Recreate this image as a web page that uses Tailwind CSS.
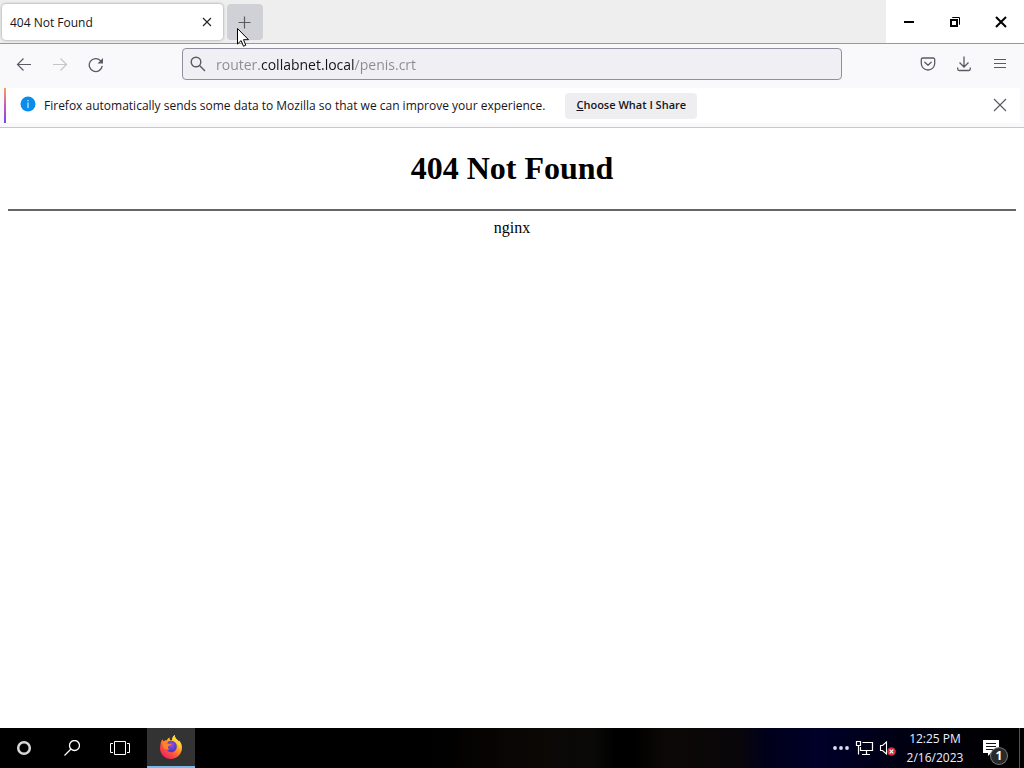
<!DOCTYPE html>
<html lang="en">
<head>
<meta charset="utf-8">
<meta name="viewport" content="width=device-width, initial-scale=1">
<title>404 Not Found</title>
<script src="https://cdn.jsdelivr.net/npm/@tailwindcss/browser@4"></script>
</head>
<body class="relative flex h-screen flex-col overflow-hidden bg-white font-['Open_Sans',sans-serif] text-xs text-[#15141a]">

<!-- Tab strip -->
<header class="flex h-11 shrink-0 border-b border-[#999] bg-[#eeeeee]">
  <div class="flex flex-1 items-start gap-1 pt-1 pl-0.5">
    <div class="flex h-9 w-[221px] items-center justify-between rounded bg-white pr-2 pl-2 shadow-[0_0_3px_rgba(0,0,0,0.4)]">
      <span class="pt-0.5">404 Not Found</span>
      <button type="button" aria-label="Close tab" class="flex size-4 items-center justify-center">
        <svg class="size-4" viewBox="0 0 16 16" fill="none" stroke="#222" stroke-width="1.1"><path d="M4 4l8 8M12 4l-8 8"/></svg>
      </button>
    </div>
    <button type="button" aria-label="New tab" class="flex size-9 items-center justify-center rounded bg-[#d0d1d7]">
      <svg class="size-4" viewBox="0 0 16 16" fill="none" stroke="#5b5b66" stroke-width="1.2"><path d="M7.5 2.5v12M1.5 8.5h12"/></svg>
    </button>
  </div>
  <div class="flex w-[138px] bg-white">
    <button type="button" aria-label="Minimize" class="flex flex-1 items-center justify-center">
      <svg class="size-4" viewBox="0 0 16 16"><path d="M3 7h10v2H3z"/></svg>
    </button>
    <button type="button" aria-label="Restore" class="flex flex-1 items-center justify-center">
      <svg class="size-4" viewBox="0 0 16 16" fill="none" stroke="#000"><path stroke-width="2" d="M4 6h6v6H4z"/><path d="M5.500 4V3.500h7v7H12"/></svg>
    </button>
    <button type="button" aria-label="Close" class="flex flex-1 items-center justify-center">
      <svg class="size-4" viewBox="0 0 16 16" fill="none" stroke="#000" stroke-width="2"><path d="M3 3l10 10M13 3L3 13"/></svg>
    </button>
  </div>
</header>

<!-- Navigation bar -->
<nav class="flex h-11 shrink-0 items-start bg-[#f9f9fb] px-4 pt-1" aria-label="Navigation">
  <div class="flex h-8 w-[166px] items-center gap-5 pt-0.5">
    <button type="button" aria-label="Back"><svg class="size-4" viewBox="0 0 16 16" fill="none" stroke="#5b5b66" stroke-width="1.2"><path d="M15 7.500H1.500M7.500 1.500l-6 6 6 6"/></svg></button>
    <button type="button" aria-label="Forward" disabled><svg class="size-4" viewBox="0 0 16 16" fill="none" stroke="#c5c5c9" stroke-width="1.200"><path d="M1 7.500h13.500M8.500 1.500l6 6-6 6"/></svg></button>
    <button type="button" aria-label="Reload"><svg class="size-4" viewBox="0 0 16 16" fill="none" stroke="#5b5b66" stroke-width="1.300"><path d="M14.200 8.800A6.500 6.500 0 1 1 12.500 3.600L14 5"/><path fill="#5b5b66" stroke="none" d="M15 1v5.500H9.500z"/></svg></button>
  </div>
  <div class="flex h-8 flex-1 items-center gap-2.5 rounded border border-[#8f8f9d] bg-[#f0f0f4] px-[7px]">
    <svg class="size-4 shrink-0" viewBox="0 0 16 16" fill="none" stroke="#5b5b66" stroke-width="1.400"><circle cx="6" cy="6" r="4.800"/><path d="M9.500 9.500L15 15"/></svg>
    <input type="text" aria-label="Address" value="router.collabnet.local/penis.crt" class="h-6 min-w-0 flex-1 bg-[linear-gradient(90deg,#8a8a92_44px,#15141a_44px,#15141a_138px,#8a8a92_138px)] bg-clip-text text-sm text-transparent outline-none">
  </div>
  <div class="flex h-8 w-[166px] items-center justify-end gap-5">
    <button type="button" aria-label="Save to Pocket"><svg class="size-4" viewBox="0 0 16 16" fill="none" stroke="#5b5b66" stroke-width="1.300" stroke-linecap="round" stroke-linejoin="round"><path d="M2.800 2h10.400A1.500 1.500 0 0 1 14.700 3.500v4a6.700 6.500 0 0 1-13.400 0v-4A1.500 1.500 0 0 1 2.800 2z"/><path d="M4.800 6.300L8 9.300l3.200-3"/></svg></button>
    <button type="button" aria-label="Downloads"><svg class="size-4" viewBox="0 0 16 16" fill="none" stroke="#5b5b66" stroke-width="1.300"><path d="M8 .500v10M3.500 6.500L8 11l4.500-4.500M1.700 11.500v1.500a1.500 1.500 0 0 0 1.500 1.500h9.600a1.500 1.500 0 0 0 1.500-1.500v-1.500"/></svg></button>
    <button type="button" aria-label="Menu"><svg class="size-4" viewBox="0 0 16 16" fill="none" stroke="#5b5b66" stroke-width="1.200"><path d="M2 3.500h12M2 7.500h12M2 11.500h12"/></svg></button>
  </div>
</nav>

<!-- Data sharing notification -->
<section class="flex h-10 shrink-0 border-b border-[#c8c8cc] bg-[#f9f9fb] px-1 pb-1" aria-label="Notification">
  <div class="w-0.5 bg-linear-to-b from-[#ff9a56] via-[#c45ab5] to-[#7542e5]"></div>
  <div class="flex flex-1 items-center bg-white pl-3.5">
    <svg class="mr-2 mb-1 size-4" viewBox="0 0 16 16"><circle cx="8" cy="8" r="7.500" fill="#0a8ced"/><path fill="#d5efff" d="M7.400 4h1.200v1.300H7.400zM7.400 6.500h1.200V12H7.400z"/></svg>
    <span>Firefox automatically sends some data to Mozilla so that we can improve your experience.</span>
    <button type="button" class="ml-5 h-[26px] rounded bg-[#eeeef0] px-[11px] text-[11px] font-semibold"><u>C</u>hoose What I Share</button>
    <button type="button" aria-label="Dismiss" class="mr-3 mb-0.5 ml-auto"><svg class="size-4" viewBox="0 0 16 16" fill="none" stroke="#5b5b66" stroke-width="1.200"><path d="M2 2l12 12M14 2L2 14"/></svg></button>
  </div>
</section>

<!-- Page content -->
<main class="min-h-0 flex-1 px-2 pt-[22px] text-center font-['Liberation_Serif',serif] text-base text-black">
  <h1 class="text-[32px] leading-9 font-bold">404 Not Found</h1>
  <hr class="mt-[23px] mb-[7px] border-t-2 border-[#65656a]">
  <p class="leading-5">nginx</p>
</main>

<!-- Taskbar -->
<footer class="flex h-10 shrink-0 items-stretch bg-[linear-gradient(90deg,#000_42%,#0b0705_52%,#0a0908_58%,#000_60%,#000_62%,#0c0806_65%,#09060a_72%,#00001c_75%,#00002a_80%,#000018_86%,#000006_94%,#000_100%)] text-[#eeeeff]">
  <button type="button" aria-label="Cortana" class="flex w-12 items-center justify-center"><svg class="size-4" viewBox="0 0 16 16" fill="none" stroke="#d8d8d8" stroke-width="2.500"><circle cx="8" cy="8" r="5.800"/></svg></button>
  <button type="button" aria-label="Search" class="flex w-12 items-center justify-center"><svg class="size-4" viewBox="0 0 16 16" fill="none" stroke="#fff" stroke-width="1.300"><circle cx="10.500" cy="5.500" r="5"/><path d="M7 9L.500 15.500"/></svg></button>
  <button type="button" aria-label="Task view" class="flex w-12 items-center justify-center"><svg class="h-4 w-5" viewBox="0 0 20 16" fill="none" stroke="#fff"><path d="M4.500 1.500h11v13h-11zM3 3.500H.500v9H3M17 3.500h2.500v9H17"/></svg></button>
  <button type="button" aria-label="Firefox" class="ml-[3px] flex w-12 items-center justify-center border-b-2 border-[#76b9ed] bg-[#333]">
    <svg class="size-6" viewBox="0 0 24 24">
      <defs>
        <linearGradient id="flame" x1=".85" y1=".1" x2=".25" y2=".95"><stop offset="0" stop-color="#fff34a"/><stop offset=".35" stop-color="#ffad27"/><stop offset=".65" stop-color="#ff5b36"/><stop offset="1" stop-color="#ee2360"/></linearGradient>
        <radialGradient id="globe" cx=".5" cy=".35"><stop offset="0" stop-color="#9455ed"/><stop offset="1" stop-color="#5937bd"/></radialGradient>
      </defs>
      <path fill="url(#flame)" d="M1.500 9.500C1.700 7 2.500 5.600 3.700 4.300l.6 2.300C5.500 5.500 6.500 5 8 5.200 8.800 3.400 9.500 3 10.700 2.500c-.3 1.200 0 2 .8 2.700L13 5c.2-2 1-3.800 2.800-5 0 2.600 1.200 3.700 3 5.300l.8 1.600.3-1.600c2.700 2.600 3.700 6.300 2.800 10C21.500 20.500 17 24 12 24 5.800 24 1 19.200 1 13z"/>
      <path fill="url(#globe)" d="M8 7.500c2-2.300 6-2.500 8.300 0 2 2.200 2 5.500.2 7.700-2 2.500-5.500 2.700-7.700.8C7 14.500 6.500 12.300 7.200 11z"/>
      <path fill="#ff8528" d="M3.500 7.200c1.700-1.500 4-1.600 5.700-.5-.7.700-.9 1.300-.7 2l3.600.3c-.1 1.100-2 1.500-2.800 2.300-.6.700-.4 2.400 1.100 3.400-2.800.600-5.300-.7-6.100-3z"/>
      <path fill="#ffd536" d="M15.800 0c0 2.600 1.200 3.700 3 5.300 2.400 2.200 3.100 5.900 1.500 9.200.3-4-1.800-7.500-7.300-9.500.2-2 1-3.800 2.800-5z"/>
    </svg>
  </button>
  <div class="ml-auto flex items-center gap-1">
    <button type="button" aria-label="Show hidden icons"><svg class="h-4 w-5" viewBox="0 0 20 16" fill="#dcdcf0"><circle cx="4" cy="8" r="1.900"/><circle cx="10" cy="8" r="1.900"/><circle cx="16" cy="8" r="1.900"/></svg></button>
    <button type="button" aria-label="Network"><svg class="h-4 w-5" viewBox="0 0 20 16" fill="none" stroke="#fff" stroke-width="1.200"><path d="M7.500 2.500h10v8h-12V7M11.500 10.500v4M7 14.500h8M1.500 1.500h4v4h-4zM3.500 5.500v9"/></svg></button>
    <button type="button" aria-label="Volume muted"><svg class="h-4 w-[18px]" viewBox="0 0 18 16"><path fill="none" stroke="#fff" stroke-width="1.100" d="M1.500 5.500h2L7.500 2v12l-4-3.500h-2z"/><circle cx="12.500" cy="11.500" r="4.300" fill="#d32f3c"/><path fill="none" stroke="#fff" stroke-width="1.200" d="M10.700 9.700l3.600 3.600M14.300 9.700l-3.600 3.600"/></svg></button>
  </div>
  <time datetime="2023-02-16T12:25" class="flex w-[76px] flex-col justify-center text-center leading-[19px]"><span>12:25 PM</span><span>2/16/2023</span></time>
  <button type="button" aria-label="1 notification" class="relative ml-1.5 flex w-10 items-center">
    <svg class="ml-1 size-4" viewBox="0 0 16 16"><path fill="#fff" d="M0 0h16v13H8l-3 3v-3H0z"/><path stroke="#111" stroke-width="1.200" d="M3 3.500h10M3 6.500h10M3 9.500h7"/></svg>
    <span class="absolute top-5 left-3 flex size-4 items-center justify-center rounded-full bg-[#292929] text-xs font-bold text-white ring-1 ring-[#777]">1</span>
  </button>
  <div class="w-[5px] border-l border-[#555]"></div>
</footer>

<!-- Mouse pointer -->
<svg class="pointer-events-none absolute top-[28px] left-[237px] h-5 w-3" viewBox="0 0 12 20" aria-hidden="true"><path fill="#fff" stroke="#000" stroke-linejoin="round" d="M.500.500v15.500l3.600-3.400 2.400 5.600 2.300-1-2.300-5.500h5z"/></svg>
</body>
</html>
